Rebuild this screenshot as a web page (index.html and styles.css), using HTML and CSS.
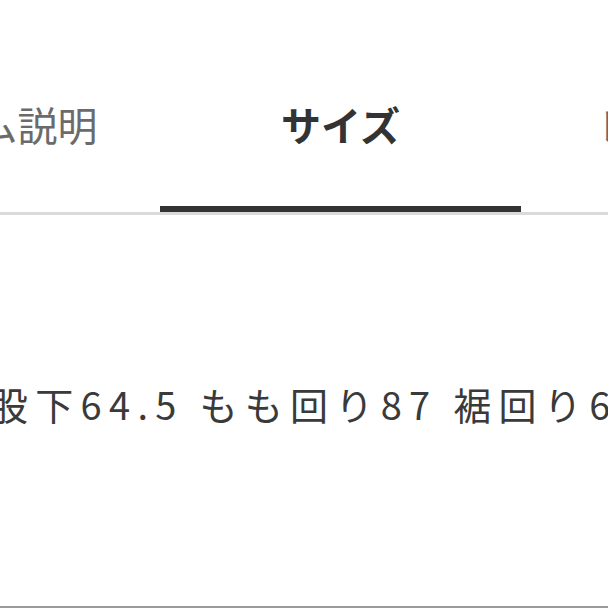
FILE: index.html
```html
<!DOCTYPE html>
<html lang="ja">
<head>
<meta charset="utf-8">
<link rel="stylesheet" href="styles.css">
</head>
<body>
<div class="page">
  <nav class="tabs">
    <div class="tab">アイテム説明</div>
    <div class="tab tab-active">サイズ</div>
    <div class="tab">レビュー(5)</div>
  </nav>
  <section class="content">
    <p class="size-text">股下64.5 もも回り87 裾回り63</p>
  </section>
</div>
</body>
</html>
```
FILE: styles.css
```css
html, body {
  margin: 0;
  padding: 0;
  background: #ffffff;
}
body {
  width: 608px;
  height: 608px;
  overflow: hidden;
  font-family: "Noto Sans CJK JP", "Noto Sans", sans-serif;
}
.page {
  display: flex;
  flex-direction: column;
  height: 608px;
}
.tabs {
  display: flex;
  flex: none;
  margin-left: -201px;
  width: 1083px;
  height: 212px;
  border-bottom: 3px solid #dadada;
}
.tab {
  flex: none;
  width: 361px;
  box-sizing: border-box;
  padding-top: 36px;
  display: flex;
  align-items: center;
  justify-content: center;
  font-size: 40px;
  line-height: 40px;
  color: #6b6b6b;
  white-space: nowrap;
}
.tab-active {
  color: #333333;
  font-weight: 700;
  box-shadow: inset 0 -6px 0 #333333;
}
.content {
  flex: 1;
  border-bottom: 2px solid #9a9a9a;
  overflow: hidden;
}
.size-text {
  margin: 170px 0 0 -10px;
  font-size: 38px;
  line-height: 38px;
  letter-spacing: 7.3px;
  color: #3a3a3a;
  white-space: nowrap;
}
```
